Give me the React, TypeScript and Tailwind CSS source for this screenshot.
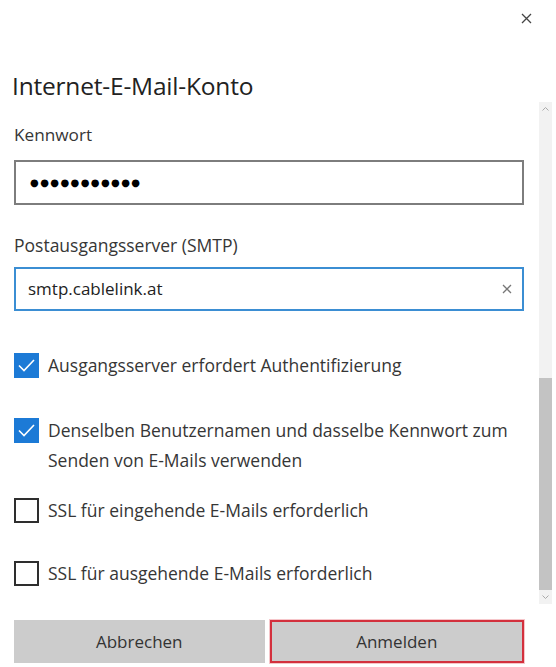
function Check({ checked }: { checked: boolean }) {
    if (checked) {
        return (
            <div className="w-[25px] h-[25px] shrink-0 bg-[#1c7ad6] flex items-center justify-center">
                <svg width="19" height="15" viewBox="0 0 19 15" fill="none">
                    <polyline points="2,7.5 7,12.5 17,2" stroke="white" strokeWidth="1.6" />
                </svg>
            </div>
        );
    }
    return <div className="w-[25px] h-[25px] shrink-0 border-2 border-[#2e2e2e] bg-white" />;
}

function Option({ checked, children }: { checked: boolean; children: React.ReactNode }) {
    return (
        <div className="flex items-start gap-[9px]">
            <Check checked={checked} />
            <span className="text-[17.5px] leading-[30px] -mt-[3px] text-[#363636]">{children}</span>
        </div>
    );
}

export default function App() {
    return (
        <div className="w-[556px] h-[667px] bg-white flex flex-col overflow-hidden font-['Open_Sans',sans-serif] text-[#2b2b2b]">
            {/* header */}
            <div className="h-[34px] flex justify-end items-center pr-[24px] pt-[2px]">
                <svg width="11" height="11" viewBox="0 0 11 11">
                    <path d="M1 1 L10 10 M10 1 L1 10" stroke="#444" strokeWidth="1.3" />
                </svg>
            </div>
            <h1 className="pl-[12px] text-[24.5px] leading-[30px] mt-[37px] text-[#222] tracking-[-0.2px]">Internet-E-Mail-Konto</h1>

            {/* scroll area */}
            <div className="flex h-[502px] mt-[1px]">
                <div className="flex-1 pl-[14px] pr-[15px] pt-[22px]">
                    <div className="text-[17.2px] leading-[22px] text-[#363636]">Kennwort</div>
                    <div className="mt-[14px] h-[45px] border-2 border-[#7d7d7d] flex items-center pl-[14px]">
                        <span className="font-['DejaVu_Sans'] text-[10px] tracking-[1.4px] text-black">●●●●●●●●●●●</span>
                    </div>

                    <div className="mt-[29px] text-[17.5px] leading-[22px] text-[#363636]">Postausgangsserver (SMTP)</div>
                    <div className="mt-[11px] h-[44px] border-2 border-[#3b8ed3] flex items-center pr-[10px]">
                        <span className="ml-[12px] flex-1 text-[17px] text-[#222]">smtp.cablelink.at</span>
                        <svg width="10" height="10" viewBox="0 0 10 10">
                            <path d="M1 1 L9 9 M9 1 L1 9" stroke="#777" strokeWidth="1.3" />
                        </svg>
                    </div>

                    <div className="mt-[42px]">
                        <Option checked>Ausgangsserver erfordert Authentifizierung</Option>
                    </div>
                    <div className="mt-[38px]">
                        <Option checked>
                            Denselben Benutzernamen und dasselbe Kennwort zum Senden von E-Mails verwenden
                        </Option>
                    </div>
                    <div className="mt-[23px]">
                        <Option checked={false}>SSL für eingehende E-Mails erforderlich</Option>
                    </div>
                    <div className="mt-[36px]">
                        <Option checked={false}>SSL für ausgehende E-Mails erforderlich</Option>
                    </div>
                </div>

                {/* scrollbar */}
                <div className="w-[13px] mr-[4px] bg-[#f2f2f2] flex flex-col items-center">
                    <div className="h-[14px] flex items-center justify-center">
                        <svg width="7" height="4" viewBox="0 0 7 4">
                            <path d="M0.5 3.5 L3.5 0.5 L6.5 3.5" stroke="#aaa" strokeWidth="1" fill="none" />
                        </svg>
                    </div>
                    <div className="flex-1 w-full flex flex-col">
                        <div className="h-[262px]" />
                        <div className="flex-1 bg-[#c3c3c3]" />
                    </div>
                    <div className="h-[14px] flex items-center justify-center">
                        <svg width="7" height="4" viewBox="0 0 7 4">
                            <path d="M0.5 0.5 L3.5 3.5 L6.5 0.5" stroke="#aaa" strokeWidth="1" fill="none" />
                        </svg>
                    </div>
                </div>
            </div>

            {/* buttons */}
            <div className="flex gap-[5px] pl-[14px] pr-[32px] mt-[16px]">
                <button className="flex-1 h-[43px] bg-[#cccccc] text-[17px] text-[#333]">Abbrechen</button>
                <button className="flex-1 h-[43px] bg-[#cccccc] text-[17px] text-[#333] border-2 border-[#d3303d] shadow-[0_0_0_1px_#f6c6ca]">
                    Anmelden
                </button>
            </div>
        </div>
    );
}
